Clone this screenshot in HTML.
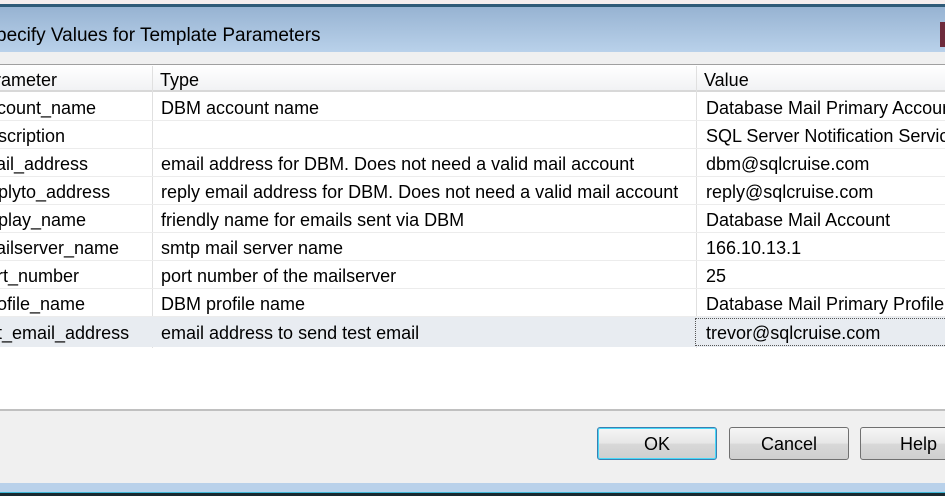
<!DOCTYPE html>
<html><head><meta charset="utf-8"><style>
*{margin:0;padding:0;box-sizing:border-box}
body{width:945px;height:496px;overflow:hidden;background:#f0f0f0;font-family:"Liberation Sans",Arial,sans-serif;font-size:18px;color:#000;position:relative}
.abs{position:absolute}
.title{left:0;top:7px;width:945px;height:45px;background:linear-gradient(#97b3d2,#b9d1ea)}
.title span{position:absolute;left:-4px;top:18px;font-size:19px;color:#000}
.grid{left:0;top:64px;width:945px;height:347px;background:#fff;border-top:1px solid #a0a0a0;border-bottom:2px solid #c0c0c0}
.hdr{left:0;top:66px;width:945px;height:26px;background:linear-gradient(#fff,#f1f2f4);border-bottom:2px solid #d8d8d8}
.cell{position:absolute;white-space:nowrap;overflow:hidden}
.row{position:absolute;left:0;width:945px;height:28px;border-bottom:1px solid #ececec}
.vl{position:absolute;top:66px;width:1px;height:282px;background:#e0e0e0}
.btn{position:absolute;top:427px;height:33px;border:1px solid #707070;border-radius:3px;background:linear-gradient(#f6f6f6 0%,#e6e6e6 50%,#d8d8d8 51%,#cfcfcf 100%);text-align:center;line-height:32px;font-size:18px}
</style></head><body>
<div class="abs" style="left:0;top:0;width:945px;height:5px;background:#f5eeee"></div>
<div class="abs" style="left:0;top:4px;width:945px;height:3px;background:#2f5b78"></div>
<div class="abs title"><span>pecify Values for Template Parameters</span></div>
<div class="abs" style="left:940px;top:22px;width:5px;height:25px;background:#6e2b3c"></div>
<div class="abs grid"></div>
<div class="abs hdr">
<div class="cell" style="left:-5px;top:4px">rameter</div>
<div class="cell" style="left:160px;top:4px">Type</div>
<div class="cell" style="left:704px;top:4px">Value</div>
</div>
<div class="vl" style="left:152px"></div>
<div class="vl" style="left:696px"></div>

<div class="row" style="top:93px"><div class="cell" style="left:-3px;top:5px">count_name</div><div class="cell" style="left:161px;top:5px">DBM account name</div><div class="cell" style="left:706px;top:5px">Database Mail Primary Account</div></div>
<div class="row" style="top:121px"><div class="cell" style="left:-2px;top:5px">scription</div><div class="cell" style="left:706px;top:5px">SQL Server Notification Service</div></div>
<div class="row" style="top:149px"><div class="cell" style="left:-4px;top:5px">ail_address</div><div class="cell" style="left:161px;top:5px">email address for DBM. Does not need a valid mail account</div><div class="cell" style="left:706px;top:5px">dbm@sqlcruise.com</div></div>
<div class="row" style="top:177px"><div class="cell" style="left:-2px;top:5px">plyto_address</div><div class="cell" style="left:161px;top:5px">reply email address for DBM. Does not need a valid mail account</div><div class="cell" style="left:706px;top:5px">reply@sqlcruise.com</div></div>
<div class="row" style="top:205px"><div class="cell" style="left:-2px;top:5px">play_name</div><div class="cell" style="left:161px;top:5px">friendly name for emails sent via DBM</div><div class="cell" style="left:706px;top:5px">Database Mail Account</div></div>
<div class="row" style="top:233px"><div class="cell" style="left:-4px;top:5px">ailserver_name</div><div class="cell" style="left:161px;top:5px">smtp mail server name</div><div class="cell" style="left:706px;top:5px">166.10.13.1</div></div>
<div class="row" style="top:261px"><div class="cell" style="left:-3px;top:5px">rt_number</div><div class="cell" style="left:161px;top:5px">port number of the mailserver</div><div class="cell" style="left:706px;top:5px">25</div></div>
<div class="row" style="top:289px"><div class="cell" style="left:-3px;top:5px">ofile_name</div><div class="cell" style="left:161px;top:5px">DBM profile name</div><div class="cell" style="left:706px;top:5px">Database Mail Primary Profile</div></div>
<div class="row" style="top:317px;background:#e8ecf1;height:30px;border-bottom:none"><div class="cell" style="left:-3px;top:6px">t_email_address</div><div class="cell" style="left:161px;top:6px">email address to send test email</div>
<div class="abs" style="left:695px;top:1px;width:260px;height:28px;border:1px dotted #555"></div>
<div class="cell" style="left:706px;top:6px">trevor@sqlcruise.com</div></div>

<div class="btn" style="left:597px;width:120px;border-color:#3c7fb1;box-shadow:inset 0 0 0 1px #48d8f8">OK</div>
<div class="btn" style="left:729px;width:120px">Cancel</div>
<div class="btn" style="left:860px;width:120px;text-align:left;padding-left:39px">Help</div>

<div class="abs" style="left:0;top:483px;width:945px;height:9px;background:#b9d1ea"></div>
<div class="abs" style="left:0;top:492px;width:945px;height:1px;background:#3fb8d8"></div>
<div class="abs" style="left:0;top:493px;width:945px;height:3px;background:#1a2a30"></div>
</body></html>
